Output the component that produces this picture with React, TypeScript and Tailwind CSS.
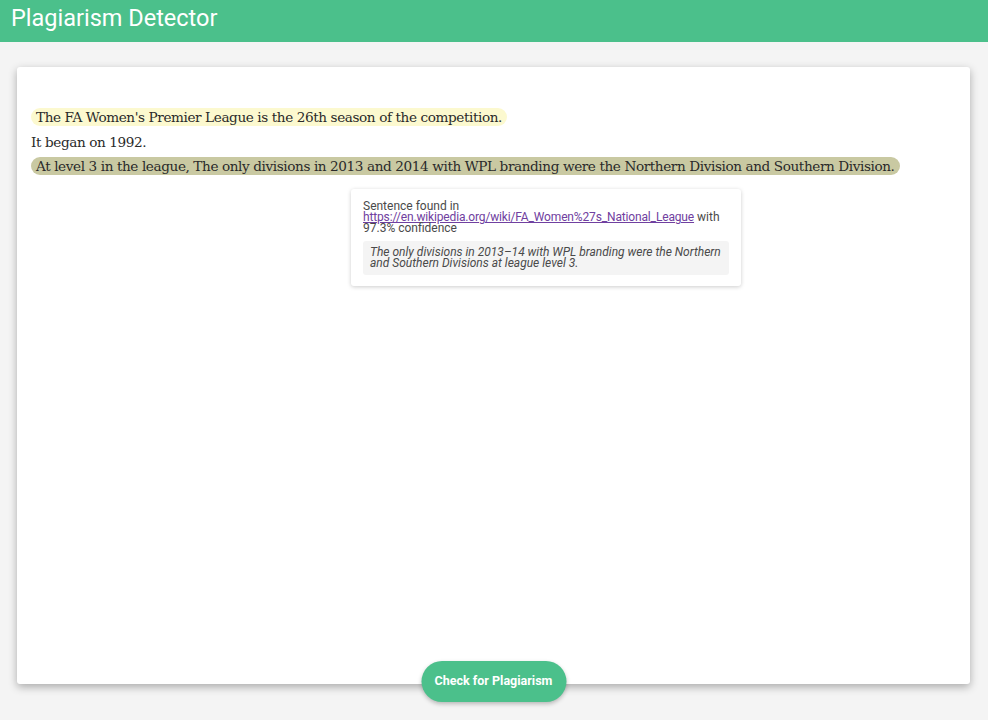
import React from 'react';

// ─── Data ────────────────────────────────────────────────────

const sentences = [
    { text: "The FA Women's Premier League is the 26th season of the competition.", hl: 'bg-[#fcf9cf]' },
    { text: 'It began on 1992.', hl: '' },
    {
        text: 'At level 3 in the league, The only divisions in 2013 and 2014 with WPL branding were the Northern Division and Southern Division.',
        hl: 'bg-[#c9c9a2]',
    },
];

// ─── Component ───────────────────────────────────────────────

export default function App() {
    return (
        <div className="min-h-[720px] bg-[#f4f4f4]" style={{ fontFamily: 'Roboto, "Liberation Sans", sans-serif' }}>
            <header className="h-[42px] bg-[#4bc08b] px-[11px] pt-[6px]">
                <h1 className="text-[23.5px] font-normal leading-[24px] text-white">Plagiarism Detector</h1>
            </header>

            <main className="px-[17px] pt-[25px] pr-[18px]">
                <div className="relative h-[617px] rounded-[3px] bg-white shadow-[0_3px_8px_rgba(0,0,0,0.3)]">
                    <div
                        className="flex flex-col items-start gap-[6.5px] px-[14px] pt-[41px] text-[13.6px] tracking-[-0.4px] text-[#2a2a2a]"
                        style={{ fontFamily: '"DejaVu Serif", "Liberation Serif", serif' }}
                    >
                        {sentences.map((s, i) => (
                            <span
                                key={i}
                                className={`h-[18px] whitespace-nowrap rounded-full leading-[18px] ${s.hl ? `${s.hl} px-[5px]` : ''}`}
                            >
                                {s.text}
                            </span>
                        ))}
                    </div>

                    {/* Tooltip for the matched sentence */}
                    <div className="absolute left-[334px] top-[122px] w-[390px] rounded-[3px] bg-white px-[12px] pt-[12px] pb-[11px] text-[12px] leading-[11px] text-[#4a4a4a] shadow-[0_1px_4px_rgba(0,0,0,0.2)]">
                        <p>
                            Sentence found in
                            <br />
                            <a href="#" className="tracking-[-0.15px] text-[#7040a0] underline">
                                https://en.wikipedia.org/wiki/FA_Women%27s_National_League
                            </a>{' '}
                            with 97.3% confidence
                        </p>
                        <blockquote className="mt-[7px] rounded-[3px] bg-[#f4f4f4] px-[7px] py-[6px] italic">
                            The only divisions in 2013–14 with WPL branding were the Northern and Southern Divisions at league level 3.
                        </blockquote>
                    </div>

                    <button className="absolute bottom-[-18px] left-1/2 h-[41px] w-[145px] -translate-x-1/2 rounded-full bg-[#4bc08b] text-[12.5px] font-bold text-white shadow-[0_2px_4px_rgba(0,0,0,0.25)]">
                        Check for Plagiarism
                    </button>
                </div>
            </main>
        </div>
    );
}
